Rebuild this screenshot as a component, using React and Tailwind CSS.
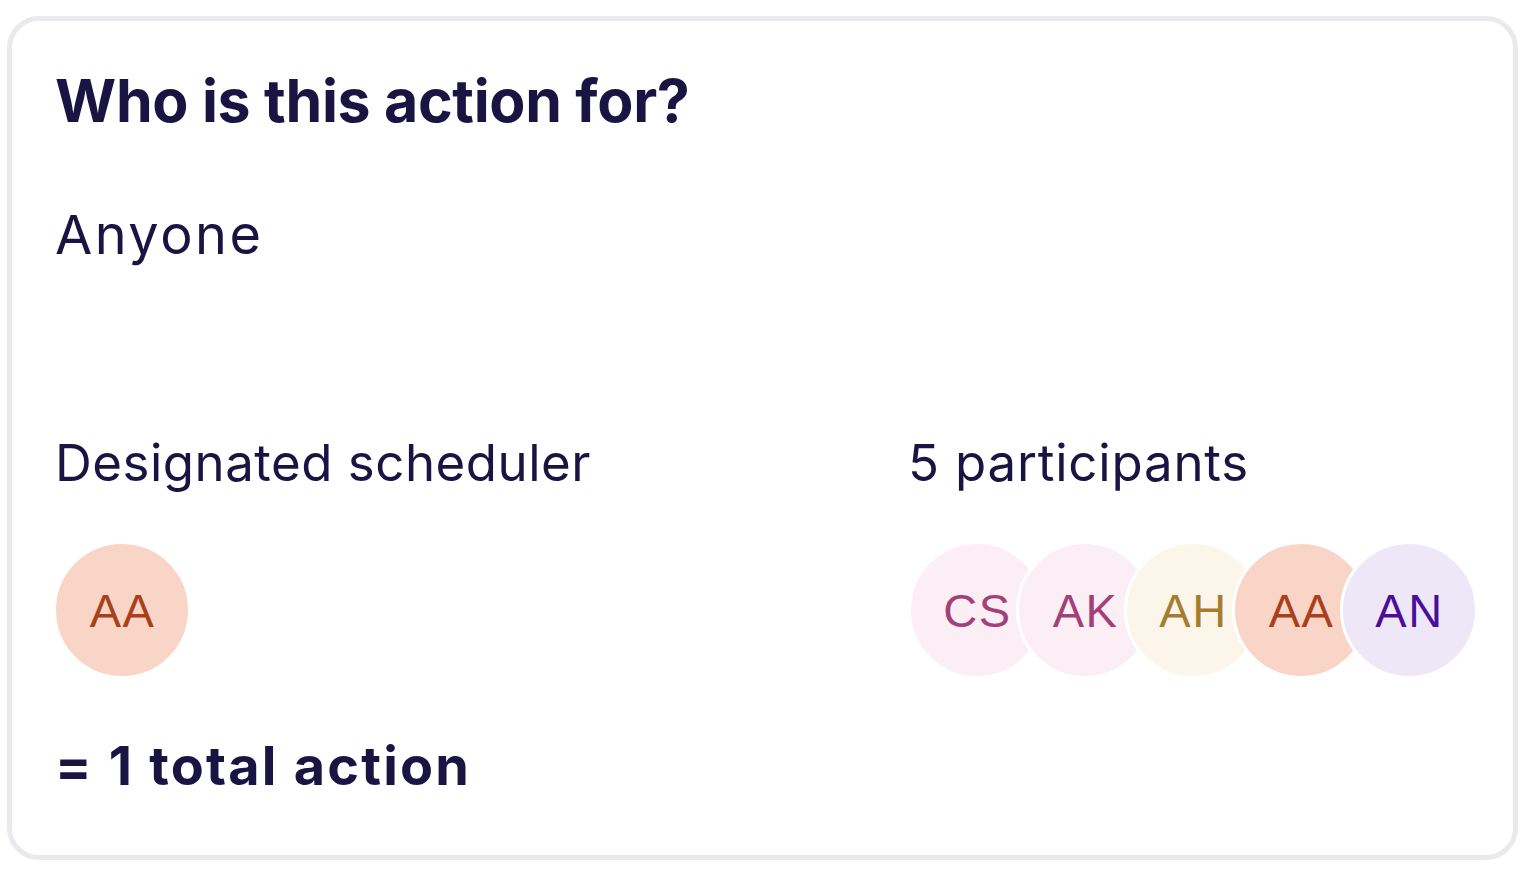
import React from 'react';

const participants = [
  { initials: 'CS', bg: 'bg-[#fbeef5]', fg: 'text-[#a3407a]' },
  { initials: 'AK', bg: 'bg-[#fbeef5]', fg: 'text-[#a3407a]' },
  { initials: 'AH', bg: 'bg-[#fcf6ea]', fg: 'text-[#a57d2d]' },
  { initials: 'AA', bg: 'bg-[#f8d5c7]', fg: 'text-[#a9401b]' },
  { initials: 'AN', bg: 'bg-[#eee7f8]', fg: 'text-[#4b0e9a]' },
];

function Avatar({ initials, bg, fg, className = '' }) {
  return (
    <div
      className={`flex h-[138px] w-[138px] shrink-0 items-center justify-center rounded-full border-[3px] border-white ${bg} ${className}`}
    >
      <span className={`pl-[1px] font-['Liberation_Sans',Arial,sans-serif] text-[47px] leading-none tracking-[1.5px] ${fg}`}>
        {initials}
      </span>
    </div>
  );
}

export default function App() {
  return (
    <div className="min-h-screen bg-white pl-[7px] pt-[16px] font-['Inter',sans-serif] text-[#1a1442] [font-variant-ligatures:none]">
      <div className="h-[844px] w-[1511px] rounded-[32px] border-[5px] border-[#e9eaed] bg-white pl-[43px] pt-[50px]">
        <h2 className="text-[59px] font-bold leading-none tracking-[-0.3px]">Who is this action for?</h2>
        <p className="mt-[78px] text-[54px] leading-none tracking-[2.5px]">Anyone</p>

        <div className="mt-[175px] flex">
          <div className="w-[855px]">
            <p className="text-[51px] leading-none tracking-[0.5px]">Designated scheduler</p>
            <div className="mt-[53px] -ml-[2px]">
              <Avatar initials="AA" bg="bg-[#f8d5c7]" fg="text-[#a9401b]" />
            </div>
          </div>
          <div>
            <p className="-ml-[2px] text-[51px] leading-none tracking-[0.8px]">5 participants</p>
            <div className="mt-[53px] -ml-[2px] flex">
              {participants.map((p, i) => (
                <Avatar key={i} {...p} className={i > 0 ? '-ml-[30px]' : ''} />
              ))}
            </div>
          </div>
        </div>

        <p className="mt-[60px] text-[54px] font-bold leading-none tracking-[2.2px]">= 1 total action</p>
      </div>
    </div>
  );
}
